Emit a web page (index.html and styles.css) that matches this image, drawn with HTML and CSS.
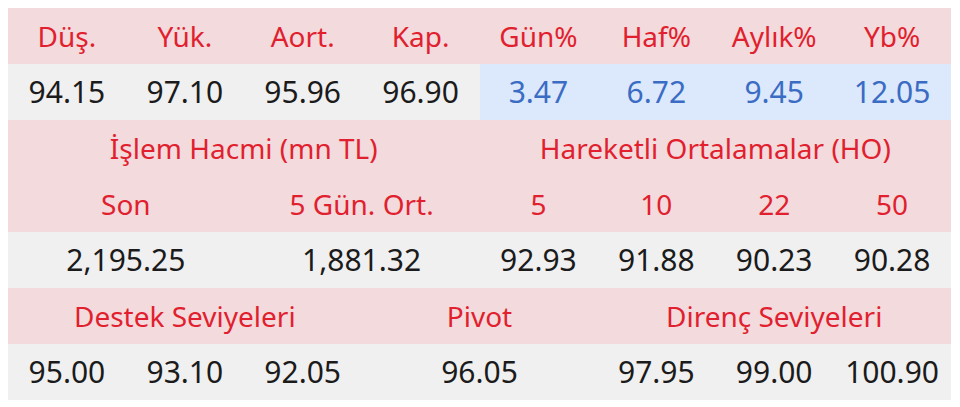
FILE: index.html
```html
<!DOCTYPE html>
<html lang="tr">
<head>
<meta charset="utf-8">
<link rel="stylesheet" href="styles.css">
</head>
<body>
<table class="stats">
  <colgroup>
    <col><col><col><col><col><col><col><col>
  </colgroup>
  <tr class="head">
    <td>Düş.</td><td>Yük.</td><td>Aort.</td><td>Kap.</td>
    <td>Gün%</td><td>Haf%</td><td>Aylık%</td><td>Yb%</td>
  </tr>
  <tr class="vals">
    <td>94.15</td><td>97.10</td><td>95.96</td><td>96.90</td>
    <td class="blue">3.47</td><td class="blue">6.72</td><td class="blue">9.45</td><td class="blue">12.05</td>
  </tr>
  <tr class="head">
    <td colspan="4">İşlem Hacmi (mn TL)</td>
    <td colspan="4">Hareketli Ortalamalar (HO)</td>
  </tr>
  <tr class="head">
    <td colspan="2">Son</td><td colspan="2">5 Gün. Ort.</td>
    <td>5</td><td>10</td><td>22</td><td>50</td>
  </tr>
  <tr class="vals">
    <td colspan="2">2,195.25</td><td colspan="2">1,881.32</td>
    <td>92.93</td><td>91.88</td><td>90.23</td><td>90.28</td>
  </tr>
  <tr class="head">
    <td colspan="3">Destek Seviyeleri</td><td colspan="2">Pivot</td><td colspan="3">Direnç Seviyeleri</td>
  </tr>
  <tr class="vals">
    <td>95.00</td><td>93.10</td><td>92.05</td><td colspan="2">96.05</td>
    <td>97.95</td><td>99.00</td><td>100.90</td>
  </tr>
</table>
</body>
</html>
```

FILE: styles.css
```css
html, body {
  margin: 0;
  padding: 0;
  background: #ffffff;
}
body {
  padding: 8px;
  font-family: "Noto Sans", "Open Sans", sans-serif;
}
.stats {
  width: 943px;
  border-collapse: collapse;
  table-layout: fixed;
}
.stats td {
  height: 56px;
  padding: 0;
  text-align: center;
  vertical-align: middle;
  line-height: 1;
  white-space: nowrap;
}
.head td {
  background: #f2dadd;
  color: #e11f2e;
  font-size: 28px;
}
.vals td {
  background: #f0f0f0;
  color: #1b1b1b;
  font-size: 30px;
}
.vals td.blue {
  background: #dce8fb;
  color: #3b6cc4;
}
```
